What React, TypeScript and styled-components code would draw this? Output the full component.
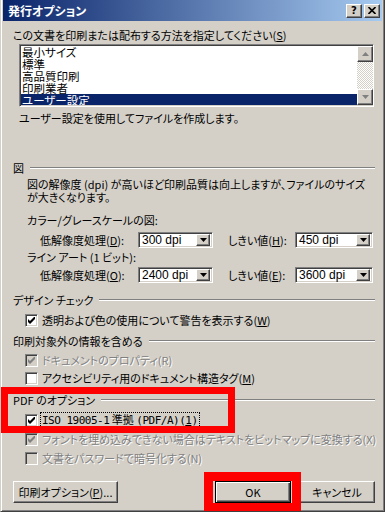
import React from "react";
import styled, { createGlobalStyle, css } from "styled-components";

const FONT = `"Noto Sans CJK JP", "MS UI Gothic", sans-serif`;

const Global = createGlobalStyle`
  html, body { margin: 0; padding: 0; background: #d4d0c8; }
  body {
    font-family: ${FONT};
    font-size: 11px;
    color: #000;
    font-feature-settings: "palt" 1;
  }
  * { box-sizing: border-box; }
`;

const raised = css`
  border: 1px solid;
  border-color: #fff #404040 #404040 #fff;
  box-shadow: inset -1px -1px #808080;
  background: #d4d0c8;
`;

const sunken = css`
  border: 1px solid;
  border-color: #808080 #fff #fff #808080;
  box-shadow: inset 1px 1px #404040, inset -1px -1px #d4d0c8;
`;

const Window = styled.div`
  position: relative;
  width: 385px;
  height: 512px;
  background: #d4d0c8;
  border-left: 1px solid #d4d0c8;
  border-right: 1px solid #404040;
  border-bottom: 1px solid #404040;
  box-shadow: inset 1px 0 #fff, inset -1px -1px #808080;
  padding: 0 2px 2px 2px;
  display: flex;
  flex-direction: column;
  overflow: hidden;
`;

const TitleBar = styled.div`
  height: 21px;
  display: flex;
  align-items: center;
  padding: 0 2px 0 5px;
  background: linear-gradient(to right, #0a246a, #a6caf0);
  gap: 2px;
`;

const TitleText = styled.div`
  flex: 1;
  color: #fff;
  font-weight: 700;
  font-size: 12px;
  line-height: 21px;
  white-space: nowrap;
`;

const CaptionButton = styled.div`
  ${raised};
  width: 16px;
  height: 14px;
  display: flex;
  align-items: center;
  justify-content: center;
  font-family: "DejaVu Sans", sans-serif;
  font-weight: 700;
  font-size: 10px;
  line-height: 12px;
  color: #000;
`;

const Body = styled.div`
  flex: 1;
  display: flex;
  flex-direction: column;
  padding: 0 8px 0 10px;
`;

const TextLine = styled.div<{ $mt: number; $ml?: number; $lh?: number }>`
  margin-top: ${(p) => p.$mt}px;
  margin-left: ${(p) => p.$ml ?? 0}px;
  line-height: ${(p) => p.$lh ?? 12}px;
  white-space: nowrap;
`;

const Acc = styled.span`
  text-decoration: underline;
  text-underline-offset: 1px;
`;

const ListBox = styled.div`
  ${sunken};
  margin: 2px 0 0 6px;
  height: 63px;
  background: #fff;
  display: flex;
  padding: 1px 0 1px 1px;
`;

const ListItems = styled.div`
  flex: 1;
  overflow: hidden;
  display: flex;
  flex-direction: column;
`;

const ListItem = styled.div<{ $selected?: boolean }>`
  flex: none;
  height: 12px;
  line-height: 12px;
  font-size: 11.5px;
  padding-left: 1px;
  white-space: nowrap;
  background: ${(p) => (p.$selected ? "#0a246a" : "transparent")};
  color: ${(p) => (p.$selected ? "#fff" : "#000")};
`;

const ScrollBar = styled.div`
  width: 16px;
  display: flex;
  flex-direction: column;
`;

const ScrollButton = styled.div`
  ${raised};
  width: 16px;
  height: 16px;
  display: flex;
  align-items: center;
  justify-content: center;
`;

const ScrollTrack = styled.div`
  flex: 1;
  background-color: #fff;
  background-image: conic-gradient(#d4d0c8 25%, #fff 0 50%, #d4d0c8 0 75%, #fff 0);
  background-size: 2px 2px;
`;

const GroupHeader = styled.div<{ $mt: number }>`
  margin-top: ${(p) => p.$mt}px;
  display: flex;
  align-items: center;
  gap: 6px;
  height: 12px;
  line-height: 12px;
  white-space: nowrap;
`;

const GroupRule = styled.div`
  flex: 1;
  height: 2px;
  border-top: 1px solid #808080;
  border-bottom: 1px solid #fff;
  margin-right: -1px;
`;

const SettingRow = styled.div<{ $mt: number }>`
  margin-top: ${(p) => p.$mt}px;
  margin-left: 27px;
  height: 16px;
  display: flex;
  align-items: center;
`;

const RowLabel = styled.div<{ $w: number; $ml?: number }>`
  width: ${(p) => p.$w}px;
  margin-left: ${(p) => p.$ml ?? 0}px;
  white-space: nowrap;
  line-height: 12px;
`;

const Combo = styled.div<{ $w: number }>`
  ${sunken};
  width: ${(p) => p.$w}px;
  height: 16px;
  background: #fff;
  display: flex;
  align-items: center;
  padding: 1px 2px 1px 2px;
`;

const ComboValue = styled.div`
  flex: 1;
  padding-left: 1px;
  line-height: 12px;
  font-family: "Liberation Sans", Arial, sans-serif;
  font-size: 12px;
  white-space: nowrap;
`;

const ComboButton = styled.div`
  ${raised};
  width: 14px;
  height: 12px;
  display: flex;
  align-items: center;
  justify-content: center;
`;

const CheckRow = styled.div<{ $mt: number }>`
  margin-top: ${(p) => p.$mt}px;
  margin-left: 12px;
  height: 14px;
  display: flex;
  align-items: center;
  gap: 2px;
`;

const CheckBox = styled.div<{ $disabled?: boolean }>`
  ${sunken};
  width: 13px;
  height: 13px;
  flex: none;
  background: ${(p) => (p.$disabled ? "#d4d0c8" : "#fff")};
  display: flex;
  align-items: center;
  justify-content: center;
`;

const CheckLabel = styled.span<{ $disabled?: boolean; $focus?: boolean }>`
  white-space: nowrap;
  line-height: 12px;
  color: ${(p) => (p.$disabled ? "#808080" : "#000")};
  text-shadow: ${(p) => (p.$disabled ? "1px 1px 0 #fff" : "none")};
  border: 1px ${(p) => (p.$focus ? "dotted #000" : "solid transparent")};
  padding: 0 1px;
`;

const IsoText = styled.span`
  font-family: "DejaVu Sans Mono", monospace;
  font-size: 11px;
  letter-spacing: -0.5px;
`;

const ButtonBar = styled.div`
  margin-top: 16px;
  display: flex;
  justify-content: space-between;
  align-items: center;
`;

const ButtonGroup = styled.div`
  display: flex;
  gap: 8px;
  margin-right: -1px;
`;

const PushButton = styled.div<{ $w: number; $default?: boolean }>`
  width: ${(p) => p.$w}px;
  height: 22px;
  display: flex;
  align-items: center;
  justify-content: center;
  white-space: nowrap;
  line-height: 12px;
  background: #d4d0c8;
  ${(p) =>
    p.$default
      ? css`
          border: 1px solid #000;
          box-shadow: inset 1px 1px #fff, inset -1px -1px #404040, inset -2px -2px #808080;
        `
      : css`
          border: 1px solid;
          border-color: #fff #404040 #404040 #fff;
          box-shadow: inset -1px -1px #808080;
        `}
`;

const Highlight = styled.div<{ $x: number; $y: number; $w: number; $h: number; $t: number }>`
  position: absolute;
  left: ${(p) => p.$x}px;
  top: ${(p) => p.$y}px;
  width: ${(p) => p.$w}px;
  height: ${(p) => p.$h}px;
  border: ${(p) => p.$t}px solid #ff0000;
  pointer-events: none;
`;

const Check = ({ color = "#000" }: { color?: string }) => (
  <svg width="7" height="7" viewBox="0 0 7 7">
    <path d="M0 2 L2 4 L7 -1 L7 2 L2 7 L0 5 Z" fill={color} />
  </svg>
);

const DownArrow = ({ color = "#000" }: { color?: string }) => (
  <svg width="7" height="4" viewBox="0 0 7 4">
    <path d="M0 0 H7 L3.5 4 Z" fill={color} />
  </svg>
);

const UpArrow = ({ color = "#000" }: { color?: string }) => (
  <svg width="7" height="4" viewBox="0 0 7 4">
    <path d="M0 4 H7 L3.5 0 Z" fill={color} />
  </svg>
);

const CloseGlyph = () => (
  <svg width="8" height="7" viewBox="0 0 8 7">
    <path d="M0.5 0 L7.5 7 M7.5 0 L0.5 7" stroke="#000" strokeWidth="1.6" />
  </svg>
);

export default function App() {
  return (
    <>
      <Global />
      <Window>
        <TitleBar>
          <TitleText>発行オプション</TitleText>
          <CaptionButton>?</CaptionButton>
          <CaptionButton>
            <CloseGlyph />
          </CaptionButton>
        </TitleBar>
        <Body>
          <TextLine $mt={8} $lh={13}>
            この文書を印刷または配布する方法を指定してください(<Acc>S</Acc>)
          </TextLine>
          <ListBox>
            <ListItems>
              <ListItem>最小サイズ</ListItem>
              <ListItem>標準</ListItem>
              <ListItem>高品質印刷</ListItem>
              <ListItem>印刷業者</ListItem>
              <ListItem $selected>ユーザー設定</ListItem>
            </ListItems>
            <ScrollBar>
              <ScrollButton>
                <UpArrow color="#808080" />
              </ScrollButton>
              <ScrollTrack />
              <ScrollButton>
                <DownArrow color="#808080" />
              </ScrollButton>
            </ScrollBar>
          </ListBox>
          <TextLine $mt={5} $ml={6}>
            ユーザー設定を使用してファイルを作成します。
          </TextLine>

          <GroupHeader $mt={38}>
            図<GroupRule />
          </GroupHeader>
          <TextLine $mt={4} $ml={14} $lh={13}>
            図の解像度 (dpi) が高いほど印刷品質は向上しますが、ファイルのサイズ
            <br />
            が大きくなります。
          </TextLine>
          <TextLine $mt={10} $ml={14}>
            カラー/グレースケールの図:
          </TextLine>
          <SettingRow $mt={6}>
            <RowLabel $w={98}>
              低解像度処理(<Acc>D</Acc>):
            </RowLabel>
            <Combo $w={75}>
              <ComboValue>300 dpi</ComboValue>
              <ComboButton>
                <DownArrow />
              </ComboButton>
            </Combo>
            <RowLabel $w={67} $ml={15}>
              しきい値(<Acc>H</Acc>):
            </RowLabel>
            <Combo $w={78}>
              <ComboValue>450 dpi</ComboValue>
              <ComboButton>
                <DownArrow />
              </ComboButton>
            </Combo>
          </SettingRow>
          <TextLine $mt={3} $ml={14}>
            ライン アート (1 ビット):
          </TextLine>
          <SettingRow $mt={4}>
            <RowLabel $w={98}>
              低解像度処理(<Acc>O</Acc>):
            </RowLabel>
            <Combo $w={75}>
              <ComboValue>2400 dpi</ComboValue>
              <ComboButton>
                <DownArrow />
              </ComboButton>
            </Combo>
            <RowLabel $w={67} $ml={15}>
              しきい値(<Acc>E</Acc>):
            </RowLabel>
            <Combo $w={78}>
              <ComboValue>3600 dpi</ComboValue>
              <ComboButton>
                <DownArrow />
              </ComboButton>
            </Combo>
          </SettingRow>

          <GroupHeader $mt={11}>
            デザイン チェック<GroupRule />
          </GroupHeader>
          <CheckRow $mt={7}>
            <CheckBox>
              <Check />
            </CheckBox>
            <CheckLabel>
              透明および色の使用について警告を表示する(<Acc>W</Acc>)
            </CheckLabel>
          </CheckRow>

          <GroupHeader $mt={8}>
            印刷対象外の情報を含める<GroupRule />
          </GroupHeader>
          <CheckRow $mt={6}>
            <CheckBox $disabled>
              <Check color="#808080" />
            </CheckBox>
            <CheckLabel $disabled>ドキュメントのプロパティ(R)</CheckLabel>
          </CheckRow>
          <CheckRow $mt={4}>
            <CheckBox />
            <CheckLabel>
              アクセシビリティ用のドキュメント構造タグ(<Acc>M</Acc>)
            </CheckLabel>
          </CheckRow>

          <GroupHeader $mt={9}>
            PDF のオプション<GroupRule />
          </GroupHeader>
          <CheckRow $mt={7}>
            <CheckBox>
              <Check />
            </CheckBox>
            <CheckLabel $focus>
              <IsoText>ISO 19005-1</IsoText> 準拠 <IsoText>(PDF/A)(<Acc>1</Acc>)</IsoText>
            </CheckLabel>
          </CheckRow>
          <CheckRow $mt={5}>
            <CheckBox $disabled>
              <Check color="#808080" />
            </CheckBox>
            <CheckLabel $disabled>
              フォントを埋め込みできない場合はテキストをビットマップに変換する(X)
            </CheckLabel>
          </CheckRow>
          <CheckRow $mt={5}>
            <CheckBox $disabled />
            <CheckLabel $disabled>文書をパスワードで暗号化する(N)</CheckLabel>
          </CheckRow>

          <ButtonBar>
            <PushButton $w={105}>
              印刷オプション(<Acc>P</Acc>)...
            </PushButton>
            <ButtonGroup>
              <PushButton $w={76} $default>
                OK
              </PushButton>
              <PushButton $w={76}>キャンセル</PushButton>
            </ButtonGroup>
          </ButtonBar>
        </Body>
        <Highlight $x={0} $y={387} $w={234} $h={46} $t={7} />
        <Highlight $x={203} $y={472} $w={97} $h={40} $t={9} />
      </Window>
    </>
  );
}
